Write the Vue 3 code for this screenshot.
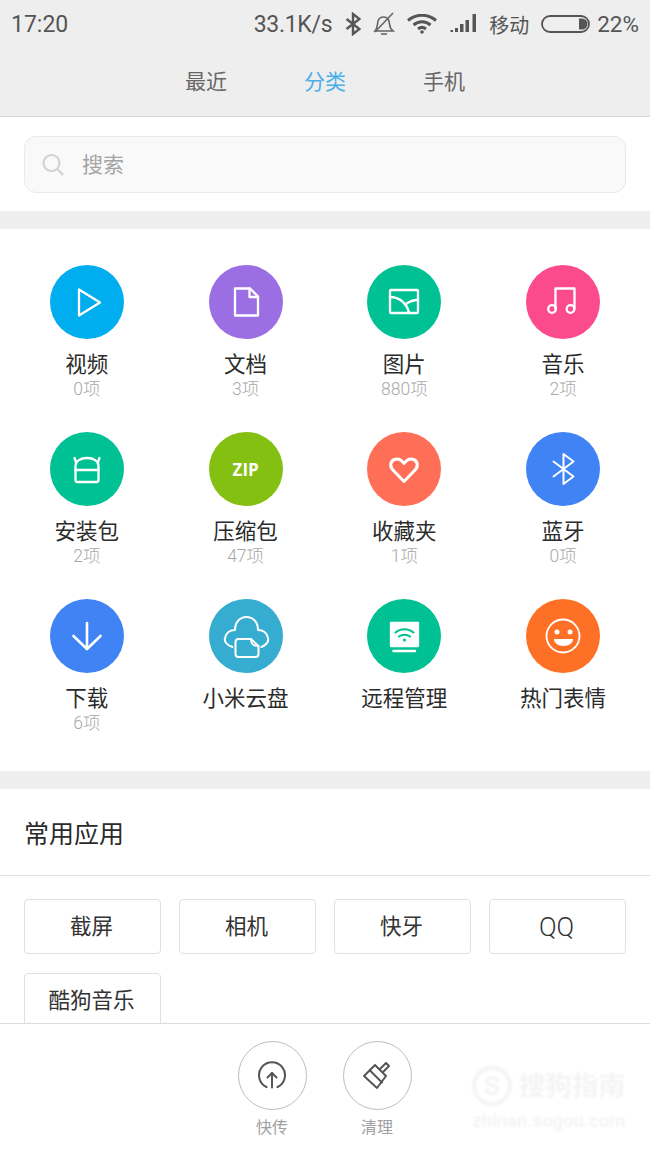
<script setup>
const categories = [
  { name: '视频', count: '0项', color: '#00aeef', icon: 'play' },
  { name: '文档', count: '3项', color: '#9b6ee3', icon: 'doc' },
  { name: '图片', count: '880项', color: '#00c193', icon: 'pic' },
  { name: '音乐', count: '2项', color: '#fb4b8d', icon: 'music' },
  { name: '安装包', count: '2项', color: '#00c193', icon: 'apk' },
  { name: '压缩包', count: '47项', color: '#84c011', icon: 'zip' },
  { name: '收藏夹', count: '1项', color: '#ff6e56', icon: 'heart' },
  { name: '蓝牙', count: '0项', color: '#4083f5', icon: 'bt' },
  { name: '下载', count: '6项', color: '#4083f5', icon: 'down' },
  { name: '小米云盘', count: '', color: '#35acd0', icon: 'cloud' },
  { name: '远程管理', count: '', color: '#00c193', icon: 'remote' },
  { name: '热门表情', count: '', color: '#ff7027', icon: 'smile' }
]
const apps = ['截屏', '相机', '快牙', 'QQ', '酷狗音乐']
</script>

<template>
  <div class="page">
    <header class="header">
      <div class="status">
        <span class="time">17:20</span>
        <div class="status-right">
          <span class="speed">33.1K/s</span>
          <svg class="st-bt" width="16" height="24" viewBox="0 0 16 24" fill="none" stroke="#555" stroke-width="2.4">
            <path d="M1.500 7l13 10-6.500 5V2l6.500 5L1.500 17" />
          </svg>
          <svg class="st-bell" width="22" height="24" viewBox="0 0 22 24" fill="none" stroke="#666" stroke-width="1.6">
            <path d="M2 19c3-3 2-6 3-10 1-3 3-4 5.500-4s4.500 1 5.500 4c1 4 0 7 4 10z" />
            <path d="M8 22h6" />
            <path d="M2 20L20 1" />
          </svg>
          <svg class="st-wifi" width="30" height="20" viewBox="0 0 30 20" fill="none" stroke="#555" stroke-width="3">
            <path d="M1 6.500c8.500-7 19.500-7 28 0" />
            <path d="M6.500 11c5-4.200 12-4.200 17 0" />
            <path d="M11 15c2.500-2 5.500-2 8 0" />
            <circle cx="15" cy="18" r="1.800" fill="#555" stroke="none" />
          </svg>
          <svg class="st-signal" width="28" height="20" viewBox="0 0 28 20" fill="#555">
            <rect x="1.500" y="16" width="2.500" height="2" />
            <rect x="6" y="14" width="3" height="4" />
            <rect x="11" y="10" width="3.500" height="8" />
            <rect x="16.500" y="6" width="3.500" height="12" />
            <rect x="23.500" y="0" width="3.500" height="18" />
          </svg>
          <span class="carrier">移动</span>
          <svg class="st-batt" width="50" height="20" viewBox="0 0 50 20" fill="none">
            <rect x="1" y="2" width="47" height="16" rx="8" stroke="#555" stroke-width="1.800" />
            <path d="M38 4.500h3a5.500 5.500 0 0 1 0 11h-3z" fill="#555" />
          </svg>
          <span class="pct">22%</span>
        </div>
      </div>
      <nav class="tabs">
        <span class="tab">最近</span>
        <span class="tab active">分类</span>
        <span class="tab">手机</span>
      </nav>
    </header>

    <main class="content">
      <section class="search-wrap">
        <div class="search">
          <svg width="24" height="24" viewBox="0 0 24 24" fill="none" stroke="#d2d2d2" stroke-width="2.200">
            <circle cx="10.500" cy="10" r="8" />
            <path d="M16.500 16l5.500 6" />
          </svg>
          <span class="search-text">搜索</span>
        </div>
      </section>

      <div class="band"></div>

      <section class="grid">
        <div v-for="c in categories" :key="c.name" class="cell">
          <div class="circle" :style="{ background: c.color }">
            <svg v-if="c.icon !== 'zip'" class="glyph" width="44" height="44" viewBox="0 0 44 44" fill="none" stroke="#fff" stroke-width="2.300" stroke-linejoin="round" stroke-linecap="round">
              <path v-if="c.icon === 'play'" d="M14 9.500v26l21-13z" />
              <template v-else-if="c.icon === 'doc'">
                <path d="M11 8.500h15l8 8v19H11z" />
                <path d="M25.500 8.500v8.500h8.500" />
              </template>
              <template v-else-if="c.icon === 'pic'">
                <rect x="8" y="10" width="28" height="23" rx="1" />
                <path d="M8 17c9 0 17 6 19 16" />
                <path d="M24 24c4-3 8-4 12-4" />
              </template>
              <template v-else-if="c.icon === 'music'">
                <path d="M14.500 29V8.500h19V29" />
                <circle cx="11" cy="29" r="3.800" />
                <circle cx="29.500" cy="29" r="3.800" />
              </template>
              <template v-else-if="c.icon === 'apk'">
                <path d="M10.500 33V19c0-5 5-8 11.500-8s11.500 3 11.500 8v14a2 2 0 0 1-2 2h-19a2 2 0 0 1-2-2z" />
                <path d="M10.500 23h23" />
                <path d="M11 15l-1.500-4M33 15l1.500-4" />
              </template>
              <path v-else-if="c.icon === 'heart'" stroke-width="3" transform="translate(0 1.500)" d="M22 33L10.500 21c-3-3.500-2-8.500 2-10 4-1.500 7 .5 9.500 4 2.500-3.500 5.500-5.500 9.500-4 4 1.500 5 6.500 2 10z" />
              <path v-else-if="c.icon === 'bt'" stroke-width="2" d="M12.500 14.500l20 15-10 7.500V7l10 7.500-20 15" />
              <template v-else-if="c.icon === 'down'">
                <path stroke-width="2.600" d="M22 9v26" />
                <path stroke-width="2.600" d="M8.500 22L22 35l13.500-13" />
              </template>
              <template v-else-if="c.icon === 'cloud'">
                <path stroke-width="2" d="M8.500 33C3 31 0 28 1 24c1-5 5-8 10-8 0-8 5-13 11.500-13S34 8 34 16c5 0 9 3 10 8 1 4-2 7-6.500 9" />
                <path stroke-width="2" d="M14 25h13l7.500 7v8a3 3 0 0 1-3 3H14.500a3 3 0 0 1-3-3V28a3 3 0 0 1 2.500-3z" />
                <path stroke-width="2" d="M27 25c0 5 2 7 7.500 7" />
              </template>
              <template v-else-if="c.icon === 'remote'">
                <path d="M9 9h27v23H9z" fill="#fff" />
                <path d="M11.500 37h21.500" stroke-width="2.500" />
                <g stroke="#00c193" stroke-width="2">
                  <path d="M13.500 18.500c5-4.500 13-4.500 18 0" />
                  <path d="M17 22.500c3-2.500 8-2.500 11 0" />
                </g>
                <circle cx="22.500" cy="26" r="1.600" fill="#00c193" stroke="none" />
              </template>
              <template v-else-if="c.icon === 'smile'">
                <circle cx="22" cy="22" r="16.500" stroke-width="1.800" />
                <circle cx="16" cy="18" r="2.500" fill="#fff" stroke="none" />
                <circle cx="29" cy="18" r="2.500" fill="#fff" stroke="none" />
                <path d="M13 25h19c0 4-4 7-9.500 7S13 29 13 25z" fill="#fff" stroke="none" />
              </template>
            </svg>
            <span v-else class="zip">ZIP</span>
          </div>
          <div class="name">{{ c.name }}</div>
          <div v-if="c.count" class="count">{{ c.count }}</div>
        </div>
      </section>

      <div class="band"></div>

      <h2 class="title">常用应用</h2>
      <section class="chips">
        <div v-for="a in apps" :key="a" class="chip" :class="{ latin: a === 'QQ' }">{{ a }}</div>
      </section>
    </main>

    <footer class="footer">
      <div class="action">
        <div class="ring">
          <svg width="30" height="30" viewBox="0 0 30 30" fill="none" stroke="#555" stroke-width="2" stroke-linecap="round" stroke-linejoin="round">
            <path d="M9.500 26a13 13 0 1 1 11 0" />
            <path d="M15 26.500V12" />
            <path d="M10.500 16.500L15 12l4.500 4.500" />
          </svg>
        </div>
        <span>快传</span>
      </div>
      <div class="action">
        <div class="ring">
          <svg width="30" height="30" viewBox="0 0 30 30" fill="none" stroke="#555" stroke-width="2" stroke-linejoin="round" stroke-linecap="round">
            <path d="M3 14L14 3l11 11-9 12z" transform="translate(-1 1)" />
            <path d="M8 9.500l12 12" />
            <path d="M18 8l6-6 3 3-6 6" />
          </svg>
        </div>
        <span>清理</span>
      </div>
      <div class="watermark" aria-hidden="true">
        <div class="wm-top">
          <span class="wm-logo">S</span>
          <span class="wm-name">搜狗指南</span>
        </div>
        <div class="wm-url">zhinan.sogou.com</div>
      </div>
    </footer>
  </div>
</template>

<style scoped>
.page {
  width: 650px;
  height: 1155px;
  display: flex;
  flex-direction: column;
  overflow: hidden;
  background: #fff;
  font-family: "Roboto", "Noto Sans CJK SC", sans-serif;
  color: #333;
}
.header {
  flex: none;
  height: 117px;
  box-sizing: border-box;
  background: #eeeeee;
  border-bottom: 1px solid #d9d9d9;
}
.status {
  height: 48px;
  display: flex;
  align-items: center;
  justify-content: space-between;
  padding: 0 11px;
  color: #555;
}
.time {
  font-size: 23px;
}
.status-right {
  display: flex;
  align-items: center;
}
.speed {
  font-size: 23px;
  letter-spacing: -0.3px;
}
.st-bt {
  margin-left: 13px;
}
.st-bell,
.st-wifi,
.st-signal,
.st-batt {
  margin-left: 12px;
}
.carrier {
  font-size: 20px;
  margin-left: 12px;
}
.pct {
  font-size: 22.500px;
  margin-left: 6px;
}
.tabs {
  height: 68px;
  display: flex;
  justify-content: center;
  align-items: center;
  gap: 77px;
  padding-bottom: 4px;
  box-sizing: border-box;
}
.tab {
  font-size: 21px;
  color: #666;
}
.tab.active {
  color: #4aaee8;
}
.content {
  flex: 1;
  min-height: 0;
  overflow: hidden;
}
.search-wrap {
  padding: 19px 24px 18px;
}
.search {
  height: 57px;
  box-sizing: border-box;
  display: flex;
  align-items: center;
  gap: 17px;
  padding-left: 16px;
  background: #f9f9f9;
  border: 1px solid #e9e9e9;
  border-radius: 12px;
  font-size: 21px;
  color: #a3a3a3;
}
.search-text {
  padding-bottom: 3px;
}
.band {
  height: 18px;
  background: #eeeeee;
}
.grid {
  display: grid;
  grid-template-columns: repeat(4, 1fr);
  grid-auto-rows: 167px;
  padding: 36px 7.500px 5px;
}
.cell {
  display: flex;
  flex-direction: column;
  align-items: center;
}
.circle {
  width: 74px;
  height: 74px;
  border-radius: 50%;
  display: flex;
  align-items: center;
  justify-content: center;
}
.glyph {
  overflow: visible;
}
.zip {
  font-family: "Open Sans", sans-serif;
  font-weight: 700;
  font-size: 17px;
  color: #fff;
}
.name {
  margin-top: 11px;
  font-size: 21.500px;
  line-height: 30px;
  color: #2b2b2b;
  white-space: nowrap;
}
.count {
  margin-top: -1px;
  font-size: 17.500px;
  font-weight: 300;
  line-height: 20px;
  color: #a8a8a8;
}
.title {
  margin: 0;
  height: 87px;
  box-sizing: border-box;
  display: flex;
  align-items: center;
  padding: 0 24px;
  font-size: 25px;
  font-weight: 400;
  color: #2b2b2b;
  border-bottom: 1px solid #dedede;
}
.chips {
  display: grid;
  grid-template-columns: repeat(4, 1fr);
  column-gap: 18px;
  row-gap: 19px;
  padding: 23px 24px 0;
}
.chip {
  height: 55px;
  box-sizing: border-box;
  display: flex;
  align-items: center;
  justify-content: center;
  padding: 0 2px 4px 0;
  border: 1px solid #e0e0e0;
  border-radius: 4px;
  font-size: 21.500px;
  color: #333;
}
.chip.latin {
  font-size: 26px;
  font-weight: 300;
  padding: 0 2px 0 0;
}
.footer {
  flex: none;
  position: relative;
  height: 132px;
  box-sizing: border-box;
  border-top: 1px solid #dcdcdc;
  background: #fff;
  display: flex;
  justify-content: center;
  gap: 36px;
  padding: 17px 1px 0 0;
}
.action {
  display: flex;
  flex-direction: column;
  align-items: center;
  font-size: 16px;
  color: #a0a0a0;
}
.ring {
  width: 69px;
  height: 69px;
  box-sizing: border-box;
  border: 1px solid #bdbdbd;
  border-radius: 50%;
  display: flex;
  align-items: center;
  justify-content: center;
  margin-bottom: 4px;
}
.watermark {
  position: absolute;
  left: 472px;
  top: 42px;
  width: 156px;
  color: #f4f4f4;
  filter: blur(1px);
}
.wm-top {
  display: flex;
  align-items: center;
  gap: 7px;
}
.wm-logo {
  width: 40px;
  height: 40px;
  box-sizing: border-box;
  border: 4px solid #f4f4f4;
  border-radius: 50%;
  display: flex;
  align-items: center;
  justify-content: center;
  font-size: 26px;
  font-weight: 700;
}
.wm-name {
  font-size: 26.500px;
  line-height: 40px;
  font-weight: 700;
  white-space: nowrap;
}
.wm-url {
  margin-top: 5px;
  font-size: 18.500px;
  line-height: 20px;
  font-weight: 700;
  white-space: nowrap;
}
</style>
